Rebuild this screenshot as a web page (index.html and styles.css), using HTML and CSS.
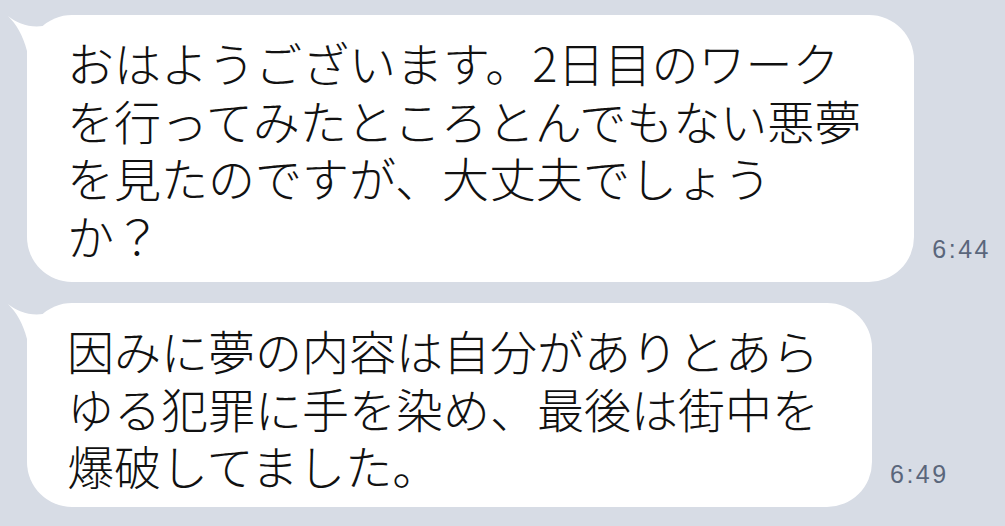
FILE: index.html
```html
<!DOCTYPE html>
<html lang="ja">
<head>
    <meta charset="UTF-8">
    <meta name="viewport" content="width=device-width, initial-scale=1.0">
    <title>トーク</title>
    <link rel="stylesheet" href="styles.css">
</head>
<body>

    <div class="chat">
        <div class="message-row">
            <div class="bubble bubble-long">
                <!-- little horn at the top left, like LINE -->
                <svg class="tail" width="40" height="46" viewBox="0 0 40 46">
                    <path d="M3,1 C12,8 24,13 38,11 L38,46 L22,46 L22,36 C18,20 11,9 3,1 Z" fill="#ffffff"/>
                </svg>
                <p class="text">おはようございます。2日目のワーク<br>を行ってみたところとんでもない悪夢<br>を見たのですが、大丈夫でしょう<br>か？</p>
            </div>
            <span class="time">6:44</span>
        </div>

        <div class="message-row">
            <div class="bubble">
                <svg class="tail" width="40" height="46" viewBox="0 0 40 46">
                    <path d="M3,1 C12,8 24,13 38,11 L38,46 L22,46 L22,36 C18,20 11,9 3,1 Z" fill="#ffffff"/>
                </svg>
                <p class="text">因みに夢の内容は自分がありとあら<br>ゆる犯罪に手を染め、最後は街中を<br>爆破してました。</p>
            </div>
            <span class="time">6:49</span>
        </div>
    </div>

</body>
</html>
```

FILE: styles.css
```css
body {
    margin: 0;
    background-color: #d7dce5; /* LINE chat background */
    font-family: "Noto Sans CJK JP", "Noto Sans", sans-serif;
    color: #111111;
}

.chat {
    display: flex;
    flex-direction: column;
    gap: 21px;
    padding: 15px 0 0 27px;
}

.message-row {
    display: flex;
    align-items: flex-end;
    gap: 18px;
}

.bubble {
    position: relative;
    background-color: #ffffff;
    border-radius: 45px;
    padding: 18px 53px 13px 40px;
}

.bubble-long {
    padding-bottom: 19px;
}

.tail {
    position: absolute;
    left: -22px;
    top: 0;
}

.text {
    margin: 0;
    font-size: 47px;
    font-weight: 300;
    line-height: 57.5px;
    white-space: nowrap;
}

.time {
    font-family: "Liberation Sans", Arial, sans-serif;
    font-size: 25px;
    letter-spacing: 2.5px;
    color: #5a667b;
    margin-bottom: 18px;
}
```
